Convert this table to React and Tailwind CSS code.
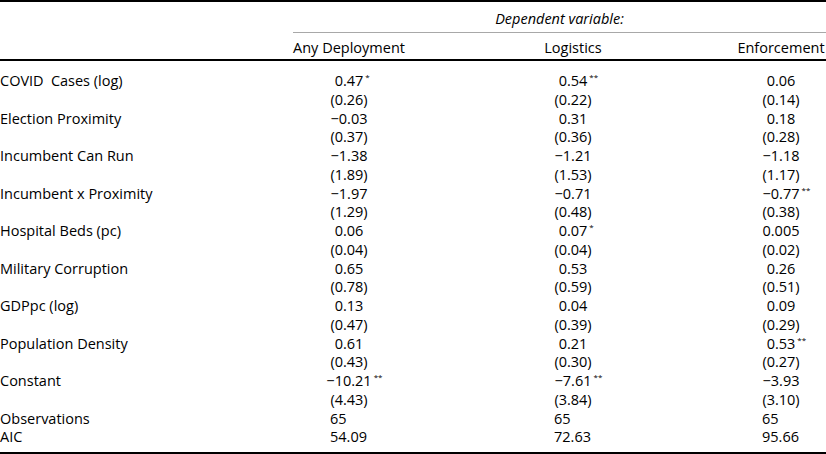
const rows = [
  { label: "COVID\u2002Cases (log)", coef: [["0.47", "*"], ["0.54", "**"], ["0.06"]], se: ["(0.26)", "(0.22)", "(0.14)"] },
  { label: "Election Proximity", coef: [["−0.03"], ["0.31"], ["0.18"]], se: ["(0.37)", "(0.36)", "(0.28)"] },
  { label: "Incumbent Can Run", coef: [["−1.38"], ["−1.21"], ["−1.18"]], se: ["(1.89)", "(1.53)", "(1.17)"] },
  { label: "Incumbent x Proximity", coef: [["−1.97"], ["−0.71"], ["−0.77", "**"]], se: ["(1.29)", "(0.48)", "(0.38)"] },
  { label: "Hospital Beds (pc)", coef: [["0.06"], ["0.07", "*"], ["0.005"]], se: ["(0.04)", "(0.04)", "(0.02)"] },
  { label: "Military Corruption", coef: [["0.65"], ["0.53"], ["0.26"]], se: ["(0.78)", "(0.59)", "(0.51)"] },
  { label: "GDPpc (log)", coef: [["0.13"], ["0.04"], ["0.09"]], se: ["(0.47)", "(0.39)", "(0.29)"] },
  { label: "Population Density", coef: [["0.61"], ["0.21"], ["0.53", "**"]], se: ["(0.43)", "(0.30)", "(0.27)"] },
  { label: "Constant", coef: [["−10.21", "**"], ["−7.61", "**"], ["−3.93"]], se: ["(4.43)", "(3.84)", "(3.10)"] },
];

const stats = [
  { label: "Observations", vals: ["65", "65", "65"] },
  { label: "AIC", vals: ["54.09", "72.63", "95.66"] },
];

const cols = "grid grid-cols-[293px_112px_331px_90px]";
// middle column sits a touch right of its cell centre in the reference
const shift = ["", "pl-[5px]", ""];

// number centred in its column; stars hang off to the right so they don't shift it
function Val({ v, stars, className = "" }) {
  return (
    <div className={`flex justify-center ${className}`}>
      <span className="relative">
        {v}
        {stars && (
          <span className="absolute left-full top-[1px] ml-[2px] text-[8px] leading-none">
            {stars}
          </span>
        )}
      </span>
    </div>
  );
}

export default function App() {
  return (
    <div className="h-[454px] w-[826px] bg-white font-['Open_Sans',sans-serif] text-[14.5px] text-black">
      <div className={`${cols} border-t-2 border-black`}>
        <div />
        <div className="col-span-3 pt-[7px] pb-[4px] text-center italic leading-[19px]">
          Dependent variable:
        </div>
        <div />
        <div className="col-span-3 border-t border-[#a8a8a8]" />
        {["", "Any Deployment", "Logistics", "Enforcement"].map((h, i) => (
          <div
            key={i}
            className={`whitespace-nowrap border-b-2 border-black pt-[5px] pb-[2px] text-center leading-[19px] ${i === 2 ? "pl-[5px]" : ""}`}
          >
            {h}
          </div>
        ))}
      </div>

      <div className={`${cols} border-b-2 border-black pt-[11px] pb-[5px] leading-[18.75px]`}>
        {rows.map((r) => (
          <div key={r.label} className="contents">
            <div className="whitespace-pre">{r.label}</div>
            {r.coef.map(([v, s], i) => (
              <Val key={i} v={v} stars={s} className={shift[i]} />
            ))}
            <div />
            {r.se.map((v, i) => (
              <Val key={i} v={v} className={shift[i]} />
            ))}
          </div>
        ))}
        {stats.map((r) => (
          <div key={r.label} className="contents">
            <div>{r.label}</div>
            {r.vals.map((v, i) => (
              <div key={i} className={`flex justify-center ${shift[i]}`}>
                <span className="w-[38px] text-left">{v}</span>
              </div>
            ))}
          </div>
        ))}
      </div>
    </div>
  );
}
